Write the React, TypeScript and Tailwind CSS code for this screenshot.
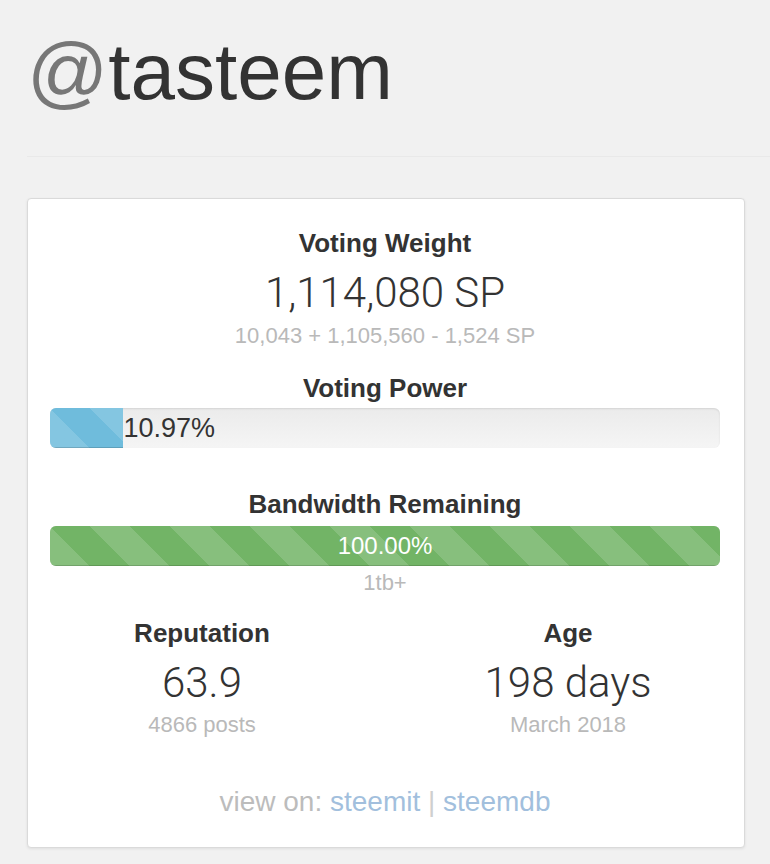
import React from 'react'

const sans = "font-['Liberation_Sans',Arial,sans-serif]"
const light = "font-['Roboto','Liberation_Sans',sans-serif] font-light"

// Bootstrap-style diagonal stripes, one 80px tile repeated along the bar
const stripes =
  'bg-[image:linear-gradient(45deg,transparent_25%,rgba(255,255,255,.15)_25%,rgba(255,255,255,.15)_50%,transparent_50%,transparent_75%,rgba(255,255,255,.15)_75%)] bg-[length:80px_80px]'

function Heading({ children, className = '' }: { children: React.ReactNode; className?: string }) {
  return <h3 className={`text-[26px] font-bold leading-[30px] text-[#333] ${className}`}>{children}</h3>
}

function Muted({ children, className = '' }: { children: React.ReactNode; className?: string }) {
  return <p className={`text-[22px] leading-[26px] text-[#b9b9b9] ${className}`}>{children}</p>
}

function Big({ children, className = '' }: { children: React.ReactNode; className?: string }) {
  return <p className={`text-[42px] leading-[48px] text-[#333] ${light} ${className}`}>{children}</p>
}

function Track({ children, className = '' }: { children: React.ReactNode; className?: string }) {
  return (
    <div
      className={`flex h-[40px] overflow-hidden rounded-[6px] bg-gradient-to-b from-[#ebebeb] to-[#f5f5f5] shadow-[inset_0_1px_2px_rgba(0,0,0,0.1)] ${className}`}
    >
      {children}
    </div>
  )
}

export default function App() {
  const votingPower = 10.97
  const bandwidth = 100

  return (
    <div className={`min-h-[864px] bg-[#f1f1f1] pl-[27px] pt-[32px] ${sans}`}>
      <h1 className="text-[80px] leading-none text-[#333]">
        <span className="text-[#777]">@</span>tasteem
      </h1>

      <hr className="mt-[44px] border-0 border-t border-[#e9e9e9]" />

      <div className="mr-[25px] mt-[41px] rounded-[4px] border border-[#dadada] bg-white pb-[29px] pl-[22px] pr-[24px] pt-[29px] text-center shadow-[0_1px_3px_rgba(0,0,0,0.08)]">
        <Heading>Voting Weight</Heading>
        <Big className="mt-[11px]">1,114,080 SP</Big>
        <Muted className="mt-[6px]">10,043 + 1,105,560 - 1,524 SP</Muted>

        <Heading className="mt-[24px]">Voting Power</Heading>
        <Track className="mt-[5px]">
          <div
            className={`h-full shrink-0 bg-[#6fbcdc] shadow-[inset_0_-1px_0_rgba(0,0,0,0.15)] ${stripes}`}
            style={{ width: `${votingPower}%` }}
          />
          <span className="text-[27px] leading-[40px] text-[#333]">{votingPower.toFixed(2)}%</span>
        </Track>

        <Heading className="mt-[41px]">Bandwidth Remaining</Heading>
        <Track className="mt-[7px]">
          <div
            className={`flex h-full shrink-0 items-center justify-center bg-[#72b466] shadow-[inset_0_-1px_0_rgba(0,0,0,0.15)] ${stripes}`}
            style={{ width: `${bandwidth}%` }}
          >
            <span className="text-[24px] leading-[40px] text-white">{bandwidth.toFixed(2)}%</span>
          </div>
        </Track>
        <Muted className="mt-[4px]">1tb+</Muted>

        <div className="mt-[22px] grid grid-cols-2 gap-x-[62px]">
          <div>
            <Heading>Reputation</Heading>
            <Big className="mt-[11px]">63.9</Big>
            <Muted className="mt-[5px]">4866 posts</Muted>
          </div>
          <div>
            <Heading>Age</Heading>
            <Big className="mt-[11px]">198 days</Big>
            <Muted className="mt-[5px]">March 2018</Muted>
          </div>
        </div>

        <p className="mt-[48px] text-[28px] leading-[32px] text-[#bcbcbc]">
          view on: <a className="text-[#a2bfdd]">steemit</a> <span className="text-[#cfcfcf]">|</span>{' '}
          <a className="text-[#a2bfdd]">steemdb</a>
        </p>
      </div>
    </div>
  )
}
